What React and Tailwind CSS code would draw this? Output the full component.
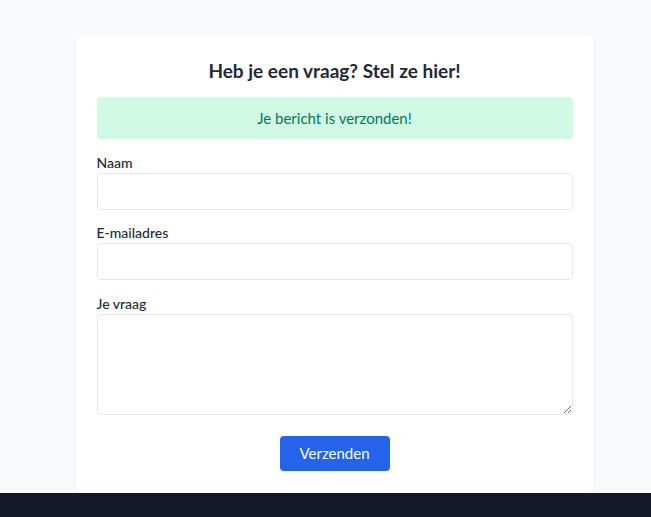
export default function App() {
  return (
    <div className="min-h-[517px] bg-[#f8f9fb] flex flex-col font-['Lato','Noto_Sans',sans-serif] text-[#1f2937]">
      <main className="flex-1 flex justify-center pt-9 pl-[18px]">
        <div className="w-[518px] h-[457px] bg-white rounded-md shadow-[0_1px_3px_rgba(0,0,0,0.06)] px-[21px] pt-[21px]">
          <h1 className="text-[19px] font-bold text-center leading-7 text-[#1f2937]">
            Heb je een vraag? Stel ze hier!
          </h1>

          <div className="mt-3 h-[42px] rounded bg-[#d1fae5] text-[#047857] text-[15px] flex items-center justify-center">
            Je bericht is verzonden!
          </div>

          <form className="mt-3.5">
            <div className="mb-[13px]">
              <label className="block text-sm font-medium leading-5 text-[#1f2937]">Naam</label>
              <input type="text" className="block w-full h-[37px] border border-[#e5e7eb] rounded px-3" />
            </div>
            <div className="mb-[14px]">
              <label className="block text-sm font-medium leading-5 text-[#1f2937]">E-mailadres</label>
              <input type="email" className="block w-full h-[37px] border border-[#e5e7eb] rounded px-3" />
            </div>
            <div>
              <label className="block text-sm font-medium leading-5 text-[#1f2937]">Je vraag</label>
              <textarea className="block w-full h-[101px] border border-[#e5e7eb] rounded px-3 py-2" />
            </div>
            <div className="flex justify-center mt-[21px]">
              <button type="button" className="w-[110px] h-[35px] rounded bg-[#2563eb] text-white text-[15px]">
                Verzenden
              </button>
            </div>
          </form>
        </div>
      </main>
      <footer className="h-6 bg-[#111827]" />
    </div>
  );
}
